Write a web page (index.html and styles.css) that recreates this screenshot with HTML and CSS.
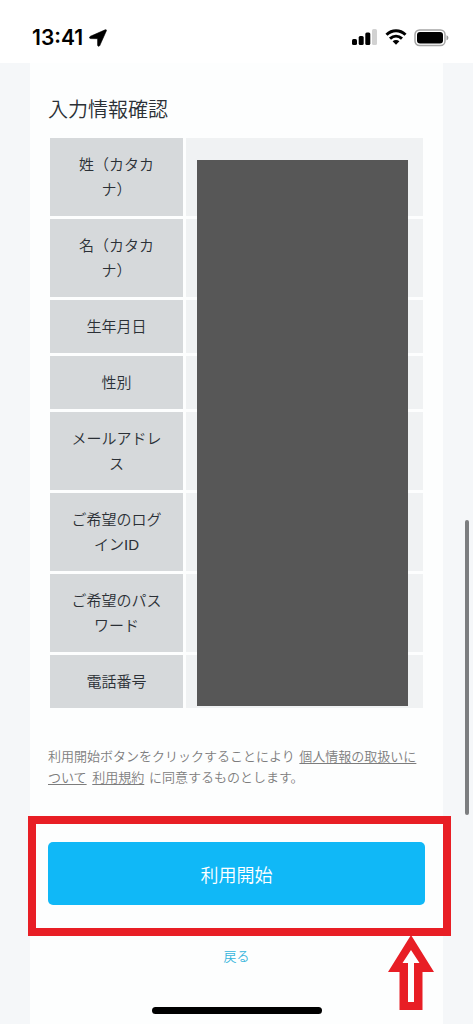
FILE: index.html
```html
<!DOCTYPE html>
<html lang="ja">
<head>
    <meta charset="UTF-8">
    <meta name="viewport" content="width=device-width, initial-scale=1.0">
    <title>入力情報確認</title>
    <link rel="stylesheet" href="styles.css">
</head>
<body>

    <header class="status-bar">
        <div class="status-left">
            <span class="time">13:41</span>
            <svg class="location" width="18" height="18" viewBox="0 0 18 18"><path d="M16.2 0.8C17.2 0.4 17.7 1 17.3 1.9L10.8 16.5C10.2 17.7 8.6 17.4 8.6 16V9.7L1.8 9.6C0.2 9.5 0 8 1.4 7.3Z" stroke="#000" stroke-width="0.6"/></svg>
        </div>
        <div class="status-right">
            <svg width="26" height="17" viewBox="0 0 26 17">
                <rect x="0" y="10" width="5" height="6" rx="1.5"/>
                <rect x="6.7" y="7" width="5" height="9" rx="1.5"/>
                <rect x="13.3" y="3.5" width="5" height="12.5" rx="1.5"/>
                <rect x="20" y="0" width="5" height="16" rx="1.5" fill="#d2d2d2"/>
            </svg>
            <svg width="22" height="17" viewBox="0 0 22 17">
                <path d="M1.5 5.8C7 0.4 15 0.4 20.5 5.8M5 9.6C8.6 6.3 13.4 6.3 17 9.6" fill="none" stroke="#000" stroke-width="3"/>
                <path d="M7.6 12.3C9.6 10.6 12.4 10.6 14.4 12.3L11 15.8Z"/>
            </svg>
            <svg width="35" height="18" viewBox="0 0 35 18">
                <rect x="1" y="1" width="30" height="15.5" rx="4.5" fill="#fff" stroke="#a5a5a5" stroke-width="1.5"/>
                <rect x="3" y="3" width="26" height="11.5" rx="3"/>
                <path d="M32.5 6.2C35 7.2 35 10.3 32.5 11.3Z" fill="#999"/>
            </svg>
        </div>
    </header>

    <main class="page">
        <div class="card">
            <h1>入力情報確認</h1>

            <div class="table-wrap">
                <table class="confirm-table">
                    <tr><th scope="row">姓（カタカナ）</th><td></td></tr>
                    <tr><th scope="row">名（カタカナ）</th><td></td></tr>
                    <tr><th scope="row">生年月日</th><td></td></tr>
                    <tr><th scope="row">性別</th><td></td></tr>
                    <tr><th scope="row">メールアドレス</th><td></td></tr>
                    <tr><th scope="row">ご希望のログインID</th><td></td></tr>
                    <tr><th scope="row">ご希望のパスワード</th><td></td></tr>
                    <tr><th scope="row">電話番号</th><td></td></tr>
                </table>
                <div class="mask"></div>
            </div>

            <p class="note">利用開始ボタンをクリックすることにより <a href="#">個人情報の取扱いについて</a> <a href="#">利用規約</a> に同意するものとします。</p>

            <div class="submit-area">
                <button type="submit" class="submit">利用開始</button>
                <div class="highlight"></div>
                <svg class="arrow" width="46" height="76" viewBox="0 0 46 76">
                    <path d="M23 0L46 37H34.5V75H11.5V37H0Z" fill="#e81e25"/>
                    <path d="M23 15L31.5 28H26V67H20V28H14.5Z" fill="#fff"/>
                </svg>
            </div>

            <a href="#" class="back">戻る</a>
        </div>
    </main>

    <div class="scrollbar"></div>
    <div class="home-indicator"></div>

</body>
</html>
```
FILE: styles.css
```css
* {
    box-sizing: border-box;
}
body {
    margin: 0;
    min-height: 100vh;
    display: flex;
    flex-direction: column;
    background-color: #fff;
    color: #2b3036;
    font-family: "Liberation Sans", "Noto Sans CJK JP", sans-serif;
    font-weight: 350;
}

/* status bar */
.status-bar {
    display: flex;
    justify-content: space-between;
    align-items: center;
    height: 63px;
    padding: 12px 24px 0 32px;
}
.status-left {
    display: flex;
    align-items: center;
    gap: 6px;
}
.status-right {
    display: flex;
    align-items: center;
    gap: 7px;
}
.time {
    font-family: Inter, sans-serif;
    font-size: 21px;
    font-weight: 600;
    line-height: 24px;
    color: #000;
}

/* content */
.page {
    flex: 1;
    display: flex;
    padding: 0 30px;
    background-color: #f5f7f9;
}
.card {
    flex: 1;
    padding: 33px 18px 0;
    background-color: #fdfefe;
}
h1 {
    margin: 0 0 11px;
    font-size: 20px;
    font-weight: 350;
    line-height: 28px;
}
.table-wrap {
    position: relative;
    margin: 0 -1px;
}
.confirm-table {
    width: 100%;
    table-layout: fixed;
    border-collapse: separate;
    border-spacing: 3px;
    font-size: 15px;
    line-height: 25px;
}
.confirm-table th {
    width: 133px;
    padding: 14px 20px;
    background-color: #d6d9db;
    font-weight: 350;
    text-align: center;
}
.confirm-table td {
    background-color: #f0f2f3;
}
.mask {
    position: absolute;
    top: 25px;
    right: 18px;
    bottom: 5px;
    left: 150px;
    background-color: #575757;
}
.note {
    margin: 35px 0 54px;
    font-size: 13px;
    line-height: 21px;
    color: #7d7d7d;
}
.note a {
    margin: 0 1px;
    color: inherit;
    text-underline-offset: 2px;
}
.submit-area {
    position: relative;
}
.submit {
    display: block;
    width: 100%;
    height: 63px;
    border: none;
    border-radius: 5px;
    background-color: #10b8f7;
    color: #fff;
    font-family: inherit;
    font-size: 18px;
    font-weight: 350;
    cursor: pointer;
}
.highlight {
    position: absolute;
    top: -26px;
    right: -26px;
    bottom: -31px;
    left: -20px;
    border: 8px solid #e81e25;
    pointer-events: none;
}
.arrow {
    position: absolute;
    top: 93px;
    right: -9px;
}
.back {
    display: block;
    width: max-content;
    margin: 42px auto 0;
    font-size: 13px;
    line-height: 20px;
    color: #35b5dc;
    text-decoration: none;
}

/* phone overlays */
.scrollbar {
    position: fixed;
    top: 520px;
    right: 4px;
    width: 4px;
    height: 295px;
    border-radius: 2px;
    background-color: #7c7e80;
}
.home-indicator {
    position: fixed;
    bottom: 10px;
    left: 50%;
    width: 170px;
    height: 7px;
    margin-left: -85px;
    border-radius: 4px;
    background-color: #000;
}
```
